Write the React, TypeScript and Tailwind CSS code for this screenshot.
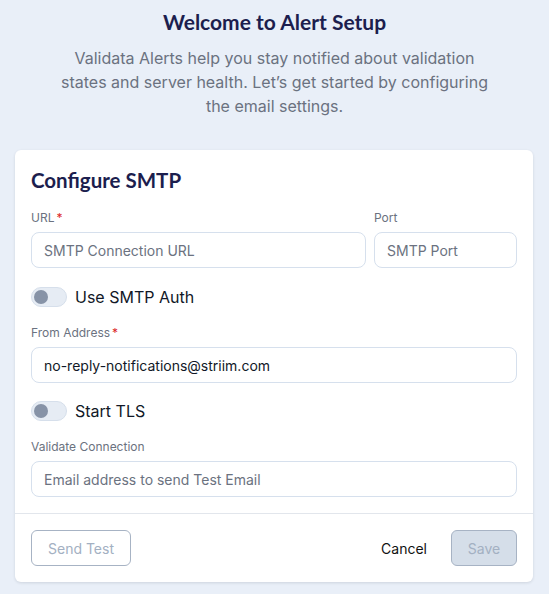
import React, { useState } from 'react';

function Toggle({ label }: { label: string }) {
  const [on, setOn] = useState(false);
  return (
    <div className="flex items-center gap-2 h-6">
      <button
        onClick={() => setOn(!on)}
        className="relative w-9 h-5 rounded-full bg-[#e6ecf4] border border-[#d6dfeb] flex items-center px-[2px]"
      >
        <span className="w-[14px] h-[14px] rounded-full bg-[#8793a7]" />
      </button>
      <span className="text-[16px] leading-6 text-[#111827]">{label}</span>
    </div>
  );
}

function Field({ label, required, placeholder, value }: { label: string; required?: boolean; placeholder?: string; value?: string }) {
  return (
    <div className="flex flex-col">
      <label className="text-[12px] leading-4 text-[#6b7280] h-4">
        {label}
        {required && <span className="text-[#dc2626] ml-[2px]">*</span>}
      </label>
      <input
        type="text"
        defaultValue={value}
        placeholder={placeholder}
        className="mt-[6px] h-9 w-full rounded-lg border border-[#d6e0ed] bg-white px-3 text-[14px] text-[#111827] placeholder:text-[#6b7280] outline-none"
      />
    </div>
  );
}

export default function App() {
  return (
    <div className="min-h-[594px] bg-[#e9eff8] pt-[10px] pb-3" style={{ fontFamily: 'Inter, sans-serif' }}>
      <h1 className="text-center text-[21px] leading-6 font-bold text-[#1c1e4e]" style={{ fontFamily: 'Lato, sans-serif' }}>
        Welcome to Alert Setup
      </h1>
      <p className="mt-3 mx-auto w-[440px] text-center text-[16px] leading-6 text-[#6b7280]">
        Validata Alerts help you stay notified about validation states and server health. Let’s get started by configuring the email settings.
      </p>

      <div className="mt-8 ml-[15px] w-[518px] rounded-md bg-white shadow-[0_1px_3px_rgba(15,23,42,0.12)]">
        <div className="px-4 pt-4 pb-4">
          <h2 className="text-[20.5px] leading-7 font-bold text-[#1c1e4e]" style={{ fontFamily: 'Lato, sans-serif' }}>
            Configure SMTP
          </h2>

          <div className="mt-4 flex gap-2">
            <div className="flex-1">
              <Field label="URL" required placeholder="SMTP Connection URL" />
            </div>
            <div className="w-[143px]">
              <Field label="Port" placeholder="SMTP Port" />
            </div>
          </div>

          <div className="mt-[17px]">
            <Toggle label="Use SMTP Auth" />
          </div>

          <div className="mt-4">
            <Field label="From Address" required value="no-reply-notifications@striim.com" />
          </div>

          <div className="mt-4">
            <Toggle label="Start TLS" />
          </div>

          <div className="mt-4">
            <Field label="Validate Connection" placeholder="Email address to send Test Email" />
          </div>
        </div>

        <div className="border-t border-[#e2e6ec] px-4 py-4 flex items-center">
          <button className="h-9 w-[100px] rounded-md border border-[#a7b3c4] text-[14px] text-[#a3b0c2]">
            Send Test
          </button>
          <div className="ml-auto flex items-center gap-6">
            <button className="text-[14px] text-[#111111]">Cancel</button>
            <button className="h-9 w-[66px] rounded-md border border-[#a7b3c4] bg-[#d5dee9] text-[14px] text-[#a3b0c2]">
              Save
            </button>
          </div>
        </div>
      </div>
    </div>
  );
}
